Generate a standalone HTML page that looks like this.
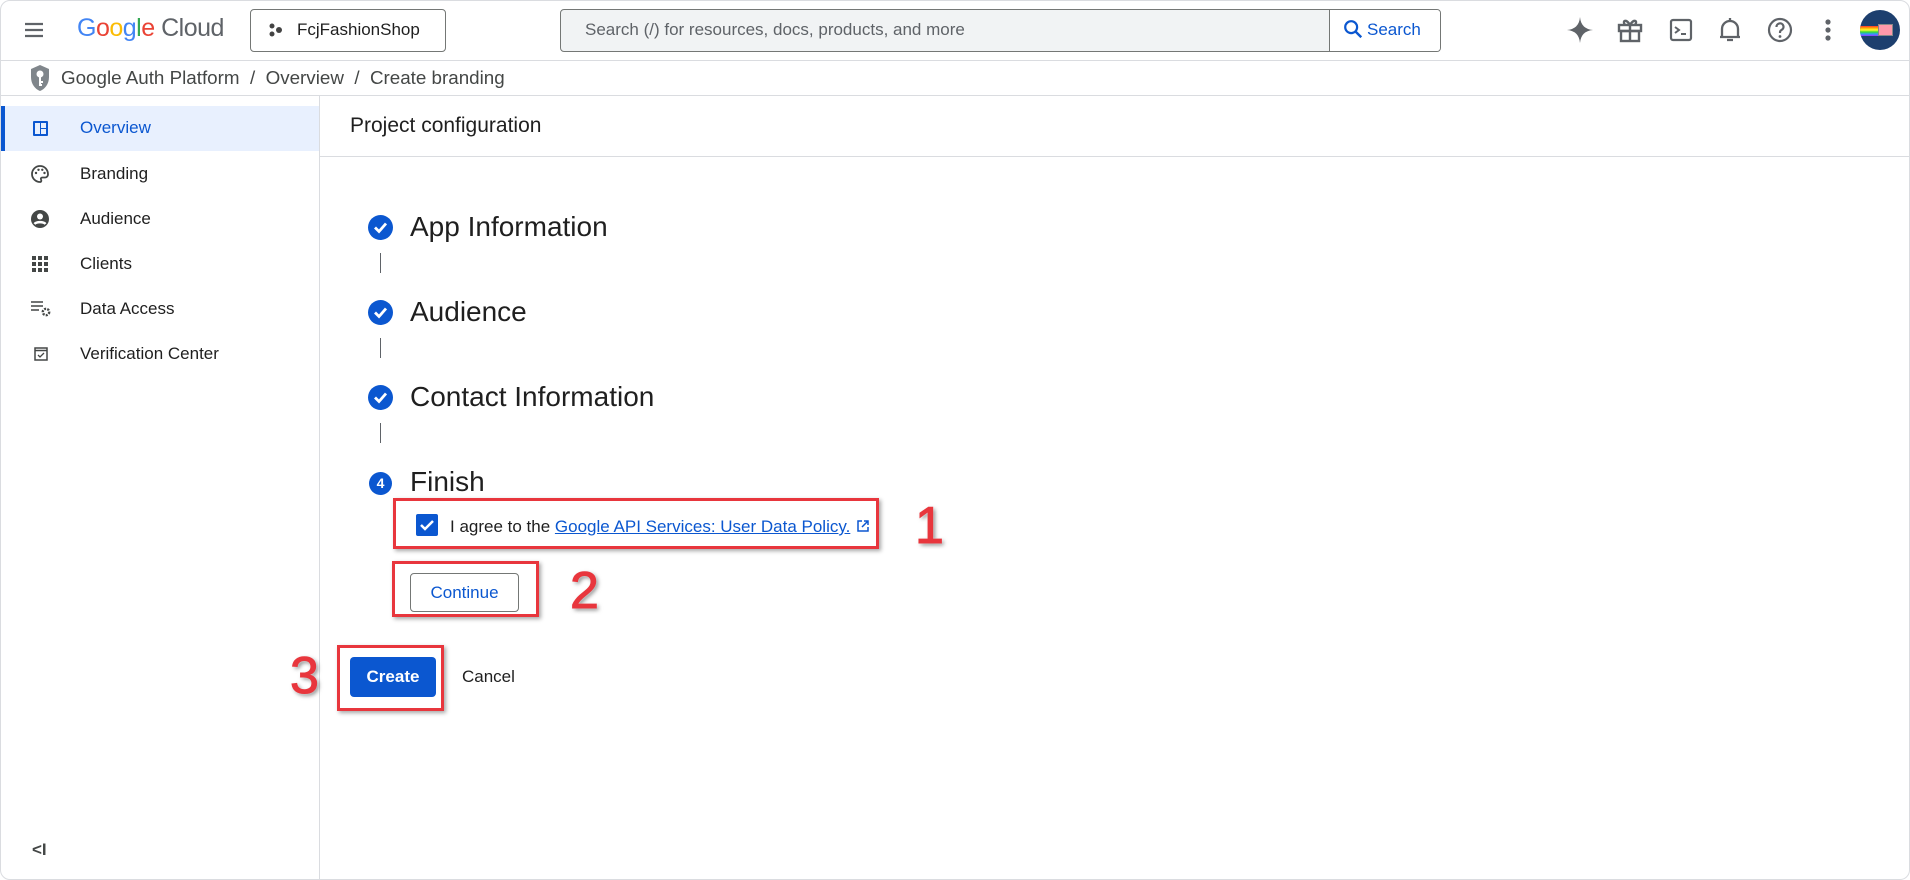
<!DOCTYPE html>
<html><head><meta charset="utf-8"><style>
*{margin:0;padding:0;box-sizing:border-box}
body{width:1910px;height:880px;overflow:hidden;background:#fff;font-family:"Liberation Sans",Arial,sans-serif;color:#1f1f1f;position:relative}
.a{position:absolute}
.ic{position:absolute}
.sb{font-size:17px;color:#1f1f1f}
.step{position:absolute;left:410px;font-size:28px;color:#1f1f1f;line-height:1}
.circ{position:absolute;left:368px;width:25px;height:25px;border-radius:50%;background:#0b57d0}
.vl{position:absolute;left:380px;width:1px;height:20px;background:#5f6368}
.red{position:absolute;border:3px solid #e8363d;box-shadow:2px 2px 4px rgba(0,0,0,.35)}
.num{position:absolute;font-size:52px;color:#e8363d;font-family:"Liberation Sans",sans-serif;text-shadow:0 0 2px #fff,2px 2px 4px rgba(0,0,0,.5);-webkit-text-stroke:1px #e8363d;line-height:1}
</style></head><body>
<div class="a" style="left:0;top:0;width:1910px;height:880px;border:1px solid #dadce0;border-radius:10px"></div>
<svg class="ic" style="left:22px;top:18px" width="24" height="24" viewBox="0 0 24 24"><path d="M3 6h18M3 12h18M3 18h18" stroke="#5f6368" stroke-width="2.2"/></svg>
<div class="a" style="left:77px;top:14px;font-size:25px;letter-spacing:-0.5px"><span style="color:#4285f4">G</span><span style="color:#ea4335">o</span><span style="color:#fbbc04">o</span><span style="color:#4285f4">g</span><span style="color:#34a853">l</span><span style="color:#ea4335">e</span> <span style="color:#5f6368">Cloud</span></div>
<div class="a" style="left:250px;top:9px;width:196px;height:43px;border:1px solid #747775;border-radius:4px"></div>
<svg class="ic" style="left:268px;top:22px" width="16" height="16" viewBox="0 0 16 16"><circle cx="4" cy="4" r="2.5" fill="#444"/><circle cx="4" cy="12" r="2.5" fill="#444"/><circle cx="11" cy="8" r="3" fill="#444"/></svg>
<div class="a" style="left:297px;top:20px;font-size:17px">FcjFashionShop</div>
<div class="a" style="left:560px;top:9px;width:881px;height:43px;border:1px solid #747775;border-radius:4px;background:#f1f3f4"></div>
<div class="a" style="left:1329px;top:10px;width:111px;height:41px;background:#fff;border-left:1px solid #747775;border-radius:0 3px 3px 0"></div>
<div class="a" style="left:585px;top:20px;font-size:17px;color:#5f6368">Search (/) for resources, docs, products, and more</div>
<svg class="ic" style="left:1342px;top:18px" width="22" height="22" viewBox="0 0 24 24"><circle cx="10" cy="10" r="6.5" stroke="#0b57d0" stroke-width="2.4" fill="none"/><path d="M15 15l6 6" stroke="#0b57d0" stroke-width="2.6"/></svg>
<div class="a" style="left:1367px;top:20px;font-size:17px;color:#0b57d0">Search</div>
<svg class="ic" style="left:1566px;top:16px" width="28" height="28" viewBox="0 0 28 28"><path d="M14 1Q15 13 27 14Q15 15 14 27Q13 15 1 14Q13 13 14 1Z" fill="#5f6368"/></svg>
<svg class="ic" style="left:1617px;top:16px" width="26" height="28" viewBox="0 0 26 28"><g stroke="#5f6368" stroke-width="2.4" fill="none"><rect x="2" y="9" width="22" height="6"/><rect x="4" y="15" width="18" height="10"/><path d="M13 9v16M13 9C9 2 5 5 8 9M13 9c4-7 8-4 5 0"/></g></svg>
<svg class="ic" style="left:1669px;top:18px" width="24" height="24" viewBox="0 0 24 24"><rect x="2" y="2" width="20" height="20" rx="2" stroke="#5f6368" stroke-width="2.2" fill="none"/><path d="M6 9l4 3-4 3M12 16h5" stroke="#5f6368" stroke-width="2" fill="none"/></svg>
<svg class="ic" style="left:1718px;top:16px" width="24" height="28" viewBox="0 0 24 28"><path d="M4 21V13a8 8 0 0 1 16 0v8M2 21h20M12 2v3M9 24h6" stroke="#5f6368" stroke-width="2.3" fill="none"/></svg>
<svg class="ic" style="left:1767px;top:17px" width="26" height="26" viewBox="0 0 26 26"><circle cx="13" cy="13" r="11" stroke="#5f6368" stroke-width="2.2" fill="none"/><path d="M9.5 10a3.5 3.5 0 1 1 5 3c-1.5.8-1.5 1.5-1.5 3" stroke="#5f6368" stroke-width="2.2" fill="none"/><circle cx="13" cy="19.5" r="1.4" fill="#5f6368"/></svg>
<svg class="ic" style="left:1824px;top:18px" width="8" height="26" viewBox="0 0 8 26"><circle cx="4" cy="4" r="2.6" fill="#5f6368"/><circle cx="4" cy="12" r="2.6" fill="#5f6368"/><circle cx="4" cy="20" r="2.6" fill="#5f6368"/></svg>
<div class="a" style="left:1860px;top:10px;width:40px;height:40px;border-radius:50%;background:#1d3f6e;overflow:hidden">
<div class="a" style="left:0;top:16px;width:20px;height:10px;background:linear-gradient(#f33,#fa0,#ff3,#3d3,#39f,#93f)"></div>
<div class="a" style="left:18px;top:14px;width:15px;height:12px;background:#f9a;border:1px solid #888"></div></div>
<div class="a" style="left:0;top:60px;width:1910px;height:1px;background:#dadce0"></div>
<svg class="ic" style="left:29px;top:64px" width="22" height="28" viewBox="0 0 22 28"><path d="M11 1L2 5v8c0 7 4 12 9 14 5-2 9-7 9-14V5z" fill="#80868b"/><circle cx="11" cy="10" r="3.5" fill="#fff"/><path d="M11 13v9M11 18h3M11 21h2" stroke="#fff" stroke-width="2"/></svg>
<div class="a" style="left:61px;top:67px;font-size:18.8px;color:#444746">Google Auth Platform&nbsp; / &nbsp;Overview&nbsp; / &nbsp;Create branding</div>
<div class="a" style="left:0;top:95px;width:1910px;height:1px;background:#dadce0"></div>
<div class="a" style="left:319px;top:96px;width:1px;height:784px;background:#dadce0"></div>
<div class="a" style="left:1px;top:106px;width:318px;height:45px;background:#e8f0fe;border-left:4px solid #0b57d0"></div>
<svg class="ic" style="left:32px;top:120px" width="17" height="17" viewBox="0 0 17 17"><rect x="1" y="1" width="15" height="15" rx="1" fill="#0b57d0"/><rect x="3" y="3" width="5" height="11" fill="#e8f0fe"/><rect x="9" y="3" width="5" height="5" fill="#e8f0fe"/><rect x="9" y="9" width="5" height="5" fill="#e8f0fe"/></svg>
<div class="a sb" style="left:80px;top:118px;color:#0b57d0">Overview</div>
<svg class="ic" style="left:30px;top:164px" width="20" height="20" viewBox="0 0 20 20"><path d="M10 2a8 8 0 0 0 0 16c1.5 0 1.5-1.5 1-2.5s0-2 1.5-2H15a3 3 0 0 0 3-3C18 5.5 14.5 2 10 2z" stroke="#444746" stroke-width="1.8" fill="none"/><circle cx="6" cy="9" r="1.2" fill="#444746"/><circle cx="8.5" cy="5.8" r="1.2" fill="#444746"/><circle cx="12.3" cy="5.8" r="1.2" fill="#444746"/><circle cx="14.5" cy="9" r="1.2" fill="#444746"/></svg>
<div class="a sb" style="left:80px;top:164px">Branding</div>
<svg class="ic" style="left:30px;top:209px" width="20" height="20" viewBox="0 0 20 20"><circle cx="10" cy="10" r="9" fill="#444746"/><circle cx="10" cy="7.5" r="3" fill="#fff"/><path d="M4.5 15c2-2.5 9-2.5 11 0" stroke="#fff" stroke-width="2.4" fill="none"/></svg>
<div class="a sb" style="left:80px;top:209px">Audience</div>
<svg class="ic" style="left:32px;top:256px" width="16" height="16" viewBox="0 0 16 16" fill="#444746"><rect x="0" y="0" width="4" height="4"/><rect x="6" y="0" width="4" height="4"/><rect x="12" y="0" width="4" height="4"/><rect x="0" y="6" width="4" height="4"/><rect x="6" y="6" width="4" height="4"/><rect x="12" y="6" width="4" height="4"/><rect x="0" y="12" width="4" height="4"/><rect x="6" y="12" width="4" height="4"/><rect x="12" y="12" width="4" height="4"/></svg>
<div class="a sb" style="left:80px;top:254px">Clients</div>
<svg class="ic" style="left:30px;top:300px" width="22" height="18" viewBox="0 0 22 18"><path d="M1 2h12M1 6h12M1 10h8" stroke="#444746" stroke-width="1.6"/><circle cx="16" cy="12" r="3.2" stroke="#444746" stroke-width="2.4" fill="none" stroke-dasharray="2 1.2"/></svg>
<div class="a sb" style="left:80px;top:299px">Data Access</div>
<svg class="ic" style="left:34px;top:347px" width="14" height="14" viewBox="0 0 14 14"><rect x="1" y="1" width="12" height="12" stroke="#444746" stroke-width="1.5" fill="none"/><path d="M1 3.5h12" stroke="#444746" stroke-width="1.5"/><path d="M4 8l2 2 4-4" stroke="#444746" stroke-width="1.3" fill="none"/></svg>
<div class="a sb" style="left:80px;top:344px">Verification Center</div>
<div class="a" style="left:32px;top:840px;font-size:17px;color:#444746;font-weight:bold">&lt;I</div>
<div class="a" style="left:350px;top:114px;font-size:21px">Project configuration</div>
<div class="a" style="left:320px;top:156px;width:1590px;height:1px;background:#dadce0"></div>
<div class="circ" style="top:215px"></div>
<div class="circ" style="top:300px"></div>
<div class="circ" style="top:385px"></div>
<svg class="ic" style="left:368px;top:215px" width="25" height="25" viewBox="0 0 25 25"><path d="M7 12.5l4 4 7-8" stroke="#fff" stroke-width="2.8" fill="none"/></svg>
<svg class="ic" style="left:368px;top:300px" width="25" height="25" viewBox="0 0 25 25"><path d="M7 12.5l4 4 7-8" stroke="#fff" stroke-width="2.8" fill="none"/></svg>
<svg class="ic" style="left:368px;top:385px" width="25" height="25" viewBox="0 0 25 25"><path d="M7 12.5l4 4 7-8" stroke="#fff" stroke-width="2.8" fill="none"/></svg>
<div class="step" style="top:213px">App Information</div>
<div class="vl" style="top:253px"></div>
<div class="step" style="top:298px">Audience</div>
<div class="vl" style="top:338px"></div>
<div class="step" style="top:383px">Contact Information</div>
<div class="vl" style="top:423px"></div>
<div class="circ" style="top:472px;left:369px;width:23px;height:23px;color:#fff;font-size:14px;font-weight:bold;text-align:center;line-height:23px">4</div>
<div class="step" style="top:468px">Finish</div>
<div class="red" style="left:393px;top:498px;width:486px;height:51px"></div>
<div class="a" style="left:416px;top:514px;width:22px;height:22px;background:#0b57d0;border-radius:2px"></div>
<svg class="ic" style="left:416px;top:514px" width="22" height="22" viewBox="0 0 22 22"><path d="M5 11l4 4 8-8" stroke="#fff" stroke-width="2.5" fill="none"/></svg>
<div class="a" style="left:450px;top:517px;font-size:17px">I agree to the <span style="color:#0b57d0;text-decoration:underline">Google API Services: User Data Policy.</span></div>
<svg class="ic" style="left:856px;top:519px" width="14" height="14" viewBox="0 0 14 14"><path d="M6 2H2v10h10V8M8 2h4v4M12 2L6 8" stroke="#0b57d0" stroke-width="1.5" fill="none"/></svg>
<div class="num" style="left:915px;top:500px">1</div>
<div class="red" style="left:392px;top:561px;width:147px;height:56px"></div>
<div class="a" style="left:410px;top:573px;width:109px;height:39px;border:1px solid #747775;border-radius:4px;color:#0b57d0;font-size:17px;text-align:center;line-height:37px">Continue</div>
<div class="num" style="left:570px;top:565px">2</div>
<div class="red" style="left:337px;top:645px;width:107px;height:66px"></div>
<div class="a" style="left:350px;top:657px;width:86px;height:40px;background:#0b57d0;border-radius:4px;color:#fff;font-size:17px;font-weight:bold;text-align:center;line-height:40px">Create</div>
<div class="a" style="left:462px;top:667px;font-size:17px">Cancel</div>
<div class="num" style="left:290px;top:650px">3</div>
</body></html>
